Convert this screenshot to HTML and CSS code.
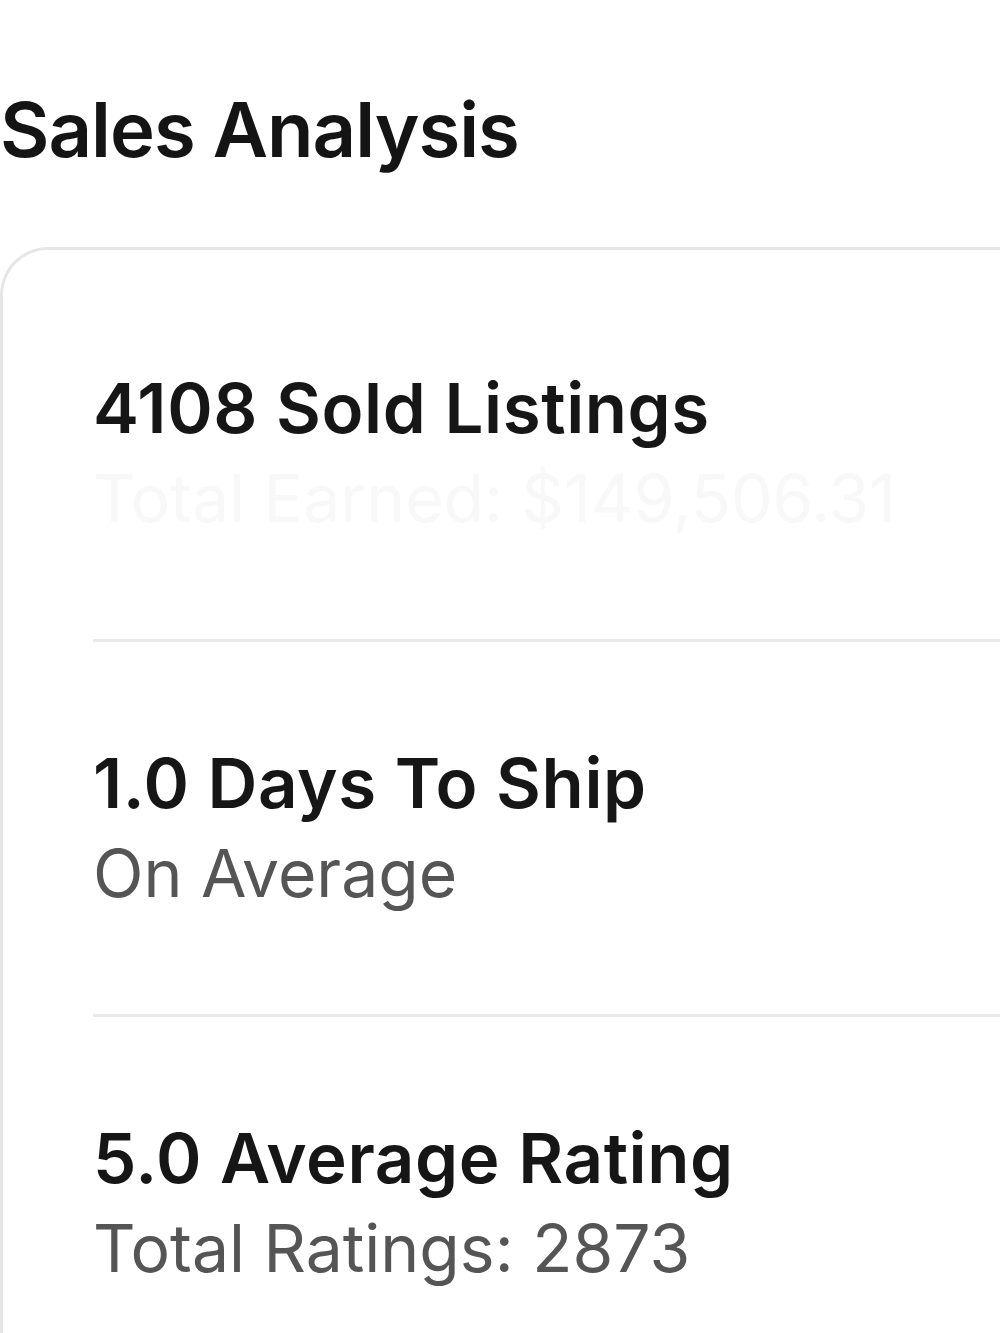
FILE: index.html
```html
<!DOCTYPE html>
<html lang="en">
  <head>
    <meta charset="UTF-8" />
    <meta name="viewport" content="width=device-width, initial-scale=1.0" />
    <title>Sales Analysis</title>
    <link rel="stylesheet" href="styles.css">
  </head>
  <body>
    <div id="page">
      <h1 class="page-title">Sales Analysis</h1>
      <div class="stats-card">
        <div class="stat stat-first">
          <p class="stat-value">4108 Sold Listings</p>
          <p class="stat-sub stat-hidden">Total Earned: $149,506.31</p>
        </div>
        <div class="stat">
          <p class="stat-value">1.0 Days To Ship</p>
          <p class="stat-sub">On Average</p>
        </div>
        <div class="stat stat-last">
          <p class="stat-value">5.0 Average Rating</p>
          <p class="stat-sub">Total Ratings: 2873</p>
        </div>
      </div>
    </div>
  </body>
</html>
```

FILE: styles.css
```css
body {
  margin: 0;
  background: #fff;
  font-family: Inter, "Noto Sans", sans-serif;
  color: #1a1a1a;
}

#page {
  height: 1333px;
  overflow: hidden;
}

.page-title {
  margin: 84px 0 73px 0;
  font-size: 76px;
  line-height: 90px;
  font-weight: 600;
  letter-spacing: -1px;
  color: #141414;
}

.stats-card {
  border: 3px solid #e6e6e6;
  border-right: none;
  border-bottom: none;
  border-radius: 48px 0 0 0;
  padding-left: 90px;
  height: 1150px;
}

.stat {
  padding: 96px 0 96px 0;
  border-bottom: 3px solid #e9e9e9;
}

.stat-first {
  padding-top: 113px;
}

.stat-last {
  border-bottom: none;
}

.stat-value,
.stat-sub {
  margin: 0;
  font-size: 66px;
  line-height: 90px;
}

.stat-value {
  font-size: 69px;
  font-weight: 600;
  letter-spacing: 0.6px;
  color: #161616;
}

.stat-sub {
  color: #555;
}

.stat-hidden {
  color: #f8f8f8;
}
```
